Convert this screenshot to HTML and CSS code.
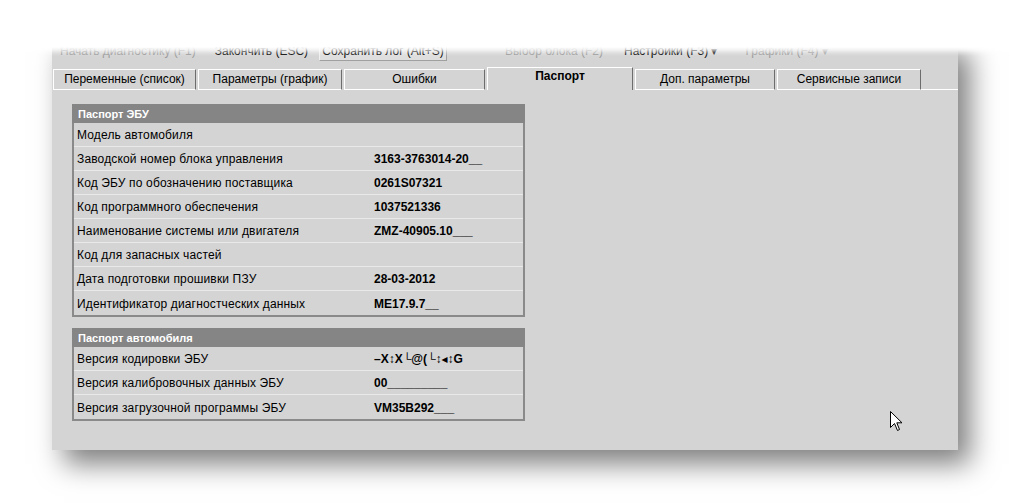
FILE: index.html
```html
<!DOCTYPE html>
<html>
<head>
<meta charset="utf-8">
<link rel="stylesheet" href="styles.css">
</head>
<body>
<div class="stage">
  <div class="window">
    <div class="menu">
      <span class="mi dis m1">Начать диагностику (F1)</span>
      <span class="mi m2">Закончить (ESC)</span>
      <span class="mbtn">Сохранить лог (Alt+S)</span>
      <span class="mi dis m4">Выбор блока (F2)</span>
      <span class="mi m5">Настройки (F3) ▾</span>
      <span class="mi dis m6">Графики (F4) ▾</span>
    </div>
    <div class="tabs">
      <div class="tab t1">Переменные (список)</div>
      <div class="tab t2">Параметры (график)</div>
      <div class="tab t3">Ошибки</div>
      <div class="tab active">Паспорт</div>
      <div class="tab t5">Доп. параметры</div>
      <div class="tab t6">Сервисные записи</div>
      <div class="tabfill"></div>
    </div>
    <div class="content">
      <div class="table">
        <div class="thead">Паспорт ЭБУ</div>
        <div class="row"><span class="lbl">Модель автомобиля</span><span class="val"></span></div>
        <div class="row"><span class="lbl">Заводской номер блока управления</span><span class="val">3163-3763014-20__</span></div>
        <div class="row"><span class="lbl">Код ЭБУ по обозначению поставщика</span><span class="val">0261S07321</span></div>
        <div class="row"><span class="lbl">Код программного обеспечения</span><span class="val">1037521336</span></div>
        <div class="row"><span class="lbl">Наименование системы или двигателя</span><span class="val">ZMZ-40905.10___</span></div>
        <div class="row"><span class="lbl">Код для запасных частей</span><span class="val"></span></div>
        <div class="row"><span class="lbl">Дата подготовки прошивки ПЗУ</span><span class="val">28-03-2012</span></div>
        <div class="row last"><span class="lbl">Идентификатор диагностческих данных</span><span class="val">ME17.9.7__</span></div>
      </div>
      <div class="table">
        <div class="thead">Паспорт автомобиля</div>
        <div class="row"><span class="lbl">Версия кодировки ЭБУ</span><span class="val">–X↕X└@(└↕◂↕G</span></div>
        <div class="row"><span class="lbl">Версия калибровочных данных ЭБУ</span><span class="val">00_________</span></div>
        <div class="row last"><span class="lbl">Версия загрузочной программы ЭБУ</span><span class="val">VM35B292___</span></div>
      </div>
    </div>
    <svg class="cursor" width="13" height="21" viewBox="0 0 13 21">
      <path d="M0.5 0.5 L0.5 16.5 L4.5 12.5 L7.5 19.5 L9.5 18.5 L6.8 11.8 L12 11.8 Z" fill="#fff" stroke="#000" stroke-width="1"/>
    </svg>
  </div>
  <div class="fade"></div>
</div>
</body>
</html>
```
FILE: styles.css
```css
html, body {
  margin: 0;
  padding: 0;
  background: #ffffff;
}
body {
  font-family: "Liberation Sans", Arial, sans-serif;
  font-size: 12px;
  color: #000;
}
.stage {
  position: relative;
  width: 1010px;
  height: 503px;
  overflow: hidden;
  padding-top: 38px;
  box-sizing: border-box;
}
.window {
  position: relative;
  margin-left: 52px;
  width: 906px;
  height: 412px;
  background: #d4d4d4;
  box-shadow: 12px 14px 26px rgba(0, 0, 0, 0.5);
  font-family: "Liberation Sans", Arial, sans-serif;
}
.fade {
  position: absolute;
  left: 0;
  top: 0;
  width: 1010px;
  height: 60px;
  background: linear-gradient(to bottom, #ffffff 0px, #ffffff 47px, rgba(255,255,255,0.7) 50px, rgba(255,255,255,0.25) 53px, rgba(255,255,255,0) 56px);
}
.menu {
  height: 22px;
  padding-top: 3px;
  box-sizing: border-box;
  display: flex;
  align-items: center;
  font-size: 12px;
  white-space: nowrap;
}
.mi { color: #000; }
.mi.dis { color: #9a9a9a; }
.m1 { margin-left: 8px; }
.m2 { margin-left: 19px; }
.mbtn {
  margin-left: 11px;
  width: 128px;
  height: 20px;
  box-sizing: border-box;
  border: 1px solid #a0a0a0;
  border-top-color: #f0f0f0;
  border-left-color: #f0f0f0;
  background: #dedede;
  display: flex;
  align-items: center;
  justify-content: center;
}
.m4 { margin-left: 58px; }
.m5 { margin-left: 21px; }
.m6 { margin-left: 28px; }

.tabs {
  margin-top: 7px;
  display: flex;
  align-items: flex-end;
  height: 23px;
  padding-left: 1px;
}
.tab {
  height: 21px;
  box-sizing: border-box;
  border-top: 1px solid #ffffff;
  border-left: 1px solid #ffffff;
  border-right: 1px solid #6c6c6c;
  border-bottom: 1px solid #ffffff;
  margin-right: 2px;
  display: flex;
  align-items: center;
  justify-content: center;
  font-size: 12px;
  padding-bottom: 1px;
}
.t1 { width: 143px; }
.t2 { width: 144px; }
.t3 { width: 141px; }
.tab.active {
  width: 146px;
  height: 23px;
  border-bottom: none;
  font-weight: bold;
  padding-bottom: 6px;
}
.t5 { width: 140px; }
.t6 { width: 144px; }
.tabfill {
  flex: 1;
  height: 0;
  border-bottom: 1px solid #ffffff;
  margin-left: -2px;
}
.content {
  padding: 14px 0 0 20px;
  display: flex;
  flex-direction: column;
  gap: 11px;
}
.table {
  width: 453px;
  box-sizing: border-box;
  border: 2px solid #8a8a8a;
  border-top: none;
  background: #d4d4d4;
}
.thead {
  height: 19px;
  background: #858585;
  color: #ffffff;
  font-weight: bold;
  font-size: 11px;
  display: flex;
  align-items: center;
  margin: 0 -2px;
  padding-left: 6px;
}
.row {
  height: 24px;
  box-sizing: border-box;
  border-bottom: 1px solid #e9e9e9;
  padding-top: 1px;
  display: flex;
  align-items: center;
  font-size: 12px;
  letter-spacing: 0.15px;
}
.row.last { border-bottom: none; }
.lbl {
  width: 297px;
  padding-left: 3px;
  white-space: nowrap;
}
.val {
  font-weight: bold;
  white-space: nowrap;
  letter-spacing: 0;
  font-family: "Liberation Sans", "DejaVu Sans", Arial, sans-serif;
}
.cursor {
  position: absolute;
  left: 838px;
  top: 373px;
}
```
